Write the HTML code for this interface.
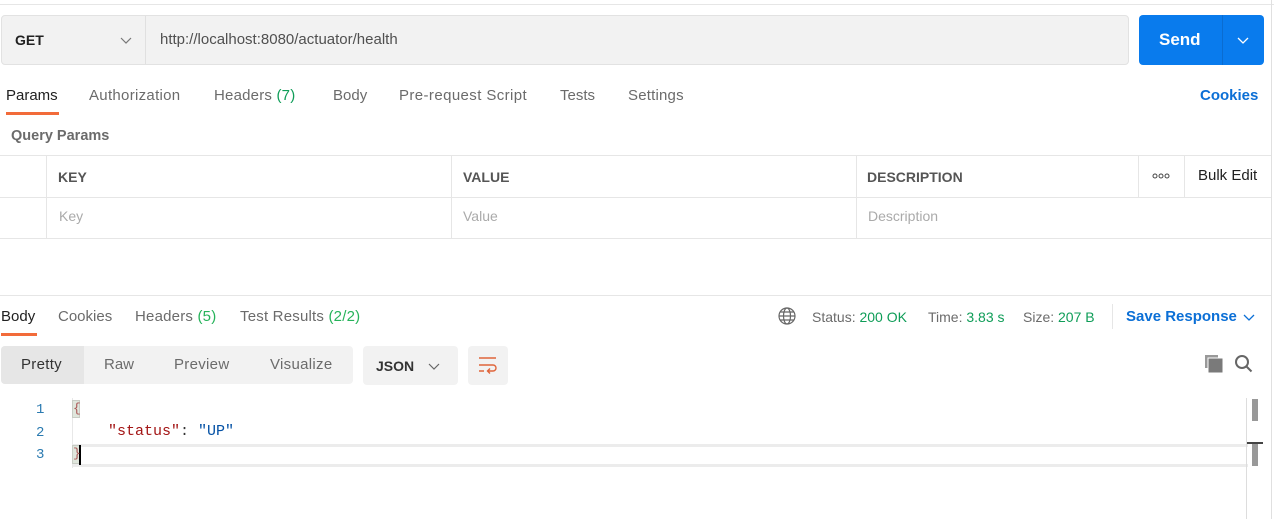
<!DOCTYPE html>
<html><head><meta charset="utf-8"><style>
*{box-sizing:border-box;margin:0;padding:0}
body{width:1274px;height:519px;background:#fff;font-family:"Liberation Sans",sans-serif;font-size:14px;color:#6b6b6b;position:relative;overflow:hidden}
.a{position:absolute;white-space:nowrap}
.g{color:#0f9d58}
.hl{position:absolute;background:#e6e6e6}
</style></head><body>
<div class="hl" style="left:0;top:4px;width:1274px;height:1px"></div>
<div class="hl" style="left:1271px;top:0;width:1px;height:519px;background:#e0e0e0"></div>
<div class="a" style="left:1px;top:15px;width:1128px;height:50px;background:#f2f2f2;border:1px solid #e2e2e2;border-radius:4px"></div>
<div class="a" style="left:145px;top:16px;width:1px;height:48px;background:#e0e0e0"></div>
<div class="a" style="left:15px;top:32px;font-weight:bold;color:#212121;font-size:14px">GET</div>
<svg class="a" style="left:120px;top:35px" width="12" height="10"><path d="M1 3l5 5 5-5" stroke="#777" fill="none" stroke-width="1.2"/></svg>
<div class="a" style="left:160px;top:31px;color:#505050;font-size:15px">http://localhost:8080/actuator/health</div>
<div class="a" style="left:1139px;top:15px;width:125px;height:50px;background:#097bed;border-radius:4px"></div>
<div class="a" style="left:1222px;top:15px;width:1px;height:50px;background:#0a6cd0"></div>
<div class="a" style="left:1159px;top:30px;color:#fff;font-weight:bold;font-size:17px">Send</div>
<svg class="a" style="left:1237px;top:35px" width="12" height="10"><path d="M1 3l5 5 5-5" stroke="#fff" fill="none" stroke-width="1.3"/></svg>
<div class="a" style="left:6px;top:87px;color:#212121;font-size:15px">Params</div>
<div class="a" style="left:6px;top:112px;width:53px;height:3px;background:#f26b3a"></div>
<div class="a" style="left:89px;top:87px;font-size:15px;letter-spacing:0.3px">Authorization</div>
<div class="a" style="left:214px;top:87px;font-size:15px;letter-spacing:0.2px">Headers <span class="g">(7)</span></div>
<div class="a" style="left:333px;top:87px;font-size:15px">Body</div>
<div class="a" style="left:399px;top:87px;font-size:15px;letter-spacing:0.4px">Pre-request Script</div>
<div class="a" style="left:560px;top:87px;font-size:15px">Tests</div>
<div class="a" style="left:628px;top:87px;font-size:15px;letter-spacing:0.2px">Settings</div>
<div class="a" style="left:1200px;top:87px;font-size:15px;color:#0b6fd6;font-weight:bold">Cookies</div>
<div class="a" style="left:11px;top:128px;font-weight:bold;color:#6b6b6b;font-size:14.5px">Query Params</div>
<div class="hl" style="left:0;top:155px;width:1271px;height:1px"></div>
<div class="hl" style="left:0;top:197px;width:1271px;height:1px"></div>
<div class="hl" style="left:0;top:238px;width:1271px;height:1px"></div>
<div class="hl" style="left:46px;top:155px;width:1px;height:84px"></div>
<div class="hl" style="left:451px;top:155px;width:1px;height:84px"></div>
<div class="hl" style="left:856px;top:155px;width:1px;height:84px"></div>
<div class="hl" style="left:1138px;top:155px;width:1px;height:42px"></div>
<div class="hl" style="left:1184px;top:155px;width:1px;height:42px"></div>
<div class="a" style="left:58px;top:169px;font-weight:bold;color:#555">KEY</div>
<div class="a" style="left:463px;top:169px;font-weight:bold;color:#555">VALUE</div>
<div class="a" style="left:867px;top:169px;font-weight:bold;color:#555">DESCRIPTION</div>
<svg class="a" style="left:1152px;top:173px" width="18" height="6" viewBox="0 0 18 6" fill="none" stroke="#444" stroke-width="1"><circle cx="3" cy="3" r="2"/><circle cx="9" cy="3" r="2"/><circle cx="15" cy="3" r="2"/></svg>
<div class="a" style="left:1198px;top:167px;color:#212121;font-size:15px">Bulk Edit</div>
<div class="a" style="left:59px;top:208px;color:#aaa">Key</div>
<div class="a" style="left:463px;top:208px;color:#aaa">Value</div>
<div class="a" style="left:868px;top:208px;color:#aaa">Description</div>
<div class="hl" style="left:0;top:295px;width:1271px;height:1px"></div>
<div class="a" style="left:1px;top:308px;color:#212121;font-size:15px">Body</div>
<div class="a" style="left:1px;top:333px;width:36px;height:3px;background:#f26b3a"></div>
<div class="a" style="left:58px;top:308px;font-size:15px">Cookies</div>
<div class="a" style="left:135px;top:308px;font-size:15px;letter-spacing:0.2px">Headers <span style="color:#26b35a">(5)</span></div>
<div class="a" style="left:240px;top:308px;font-size:15px;letter-spacing:0.2px">Test Results <span style="color:#26b35a">(2/2)</span></div>
<svg class="a" style="left:778px;top:307px" width="18" height="18" viewBox="0 0 18 18" fill="none" stroke="#666" stroke-width="1.2"><circle cx="9" cy="9" r="8"/><ellipse cx="9" cy="9" rx="3.5" ry="8"/><path d="M1 9h16M2.5 5h13M2.5 13h13"/></svg>
<div class="a" style="left:812px;top:309px">Status: <span class="g">200 OK</span></div>
<div class="a" style="left:928px;top:309px">Time: <span class="g">3.83 s</span></div>
<div class="a" style="left:1023px;top:309px">Size: <span class="g">207 B</span></div>
<div class="hl" style="left:1112px;top:304px;width:1px;height:25px"></div>
<div class="a" style="left:1126px;top:308px;font-size:15px;color:#0b6fd6;font-weight:bold">Save Response</div>
<svg class="a" style="left:1243px;top:312px" width="12" height="10"><path d="M1 3l5 5 5-5" stroke="#0b6fd6" fill="none" stroke-width="1.3"/></svg>
<div class="a" style="left:1px;top:346px;width:352px;height:38px;background:#f2f2f2;border-radius:4px"></div>
<div class="a" style="left:1px;top:346px;width:83px;height:38px;background:#e6e6e6;border-radius:4px 0 0 4px"></div>
<div class="a" style="left:21px;top:356px;font-size:15px;color:#333;letter-spacing:0.3px">Pretty</div>
<div class="a" style="left:104px;top:356px;font-size:15px">Raw</div>
<div class="a" style="left:174px;top:356px;font-size:15px;letter-spacing:0.3px">Preview</div>
<div class="a" style="left:270px;top:356px;font-size:15px;letter-spacing:0.3px">Visualize</div>
<div class="a" style="left:363px;top:346px;width:95px;height:39px;background:#f2f2f2;border-radius:4px"></div>
<div class="a" style="left:376px;top:358px;font-weight:bold;color:#333;font-size:14px">JSON</div>
<svg class="a" style="left:428px;top:361px" width="12" height="10"><path d="M1 3l5 5 5-5" stroke="#666" fill="none" stroke-width="1.2"/></svg>
<div class="a" style="left:468px;top:346px;width:40px;height:39px;background:#f2f2f2;border-radius:4px"></div>
<svg class="a" style="left:478px;top:356px" width="20" height="18" viewBox="0 0 20 18" fill="none" stroke="#e0643a" stroke-width="1.4"><path d="M1 2h17M1 9h14a3 3 0 0 1 0 6h-5M12 12.5l-2.5 2.5 2.5 2.5M1 15h5"/></svg>
<svg class="a" style="left:1205px;top:355px" width="19" height="19" viewBox="0 0 19 19"><rect x="0" y="0" width="13" height="13" fill="#999"/><rect x="3" y="3" width="15" height="15" fill="#7a7a7a" stroke="#fff" stroke-width="1"/></svg>
<svg class="a" style="left:1234px;top:354px" width="20" height="20" viewBox="0 0 20 20" fill="none" stroke="#666" stroke-width="2"><circle cx="8" cy="8" r="6"/><path d="M12.5 12.5l5 5"/></svg>
<div class="a" style="left:72px;top:444px;width:1176px;height:23px;border-top:3px solid #ececec;border-bottom:3px solid #ececec"></div>
<div class="a" style="left:72px;top:398px;width:1px;height:70px;background:#e8e8e8"></div>
<div class="a" style="left:72px;top:400px;width:8px;height:18px;background:#dfe6dc;border:1px solid #c8ccc4"></div>
<div class="a" style="left:72px;top:445px;width:8px;height:19px;background:#dfe6dc;border:1px solid #c8ccc4"></div>
<div class="a" style="left:79px;top:445px;width:2px;height:20px;background:#000"></div>
<div class="a" style="left:36px;top:399px;font-family:'Liberation Mono',monospace;color:#2a7ab0;font-size:14px;line-height:22.5px">1<br>2<br>3</div>
<div class="a" style="left:73px;top:401px;font-family:'Liberation Mono',monospace;font-size:13px;color:#a55;">{</div>
<div class="a" style="left:73px;top:446px;font-family:'Liberation Mono',monospace;font-size:13px;color:#a55;">}</div>
<div class="a" style="left:108px;top:423px;font-family:'Liberation Mono',monospace;font-size:15px"><span style="color:#a31515">"status"</span><span style="color:#333">: </span><span style="color:#0451a5">"UP"</span></div>
<div class="hl" style="left:1246px;top:398px;width:1px;height:121px;background:#ddd"></div>
<div class="a" style="left:1252px;top:399px;width:6px;height:22px;background:#999"></div>
<div class="a" style="left:1247px;top:442px;width:16px;height:2px;background:#444"></div>
<div class="a" style="left:1252px;top:444px;width:6px;height:22px;background:#999"></div>
</body></html>
